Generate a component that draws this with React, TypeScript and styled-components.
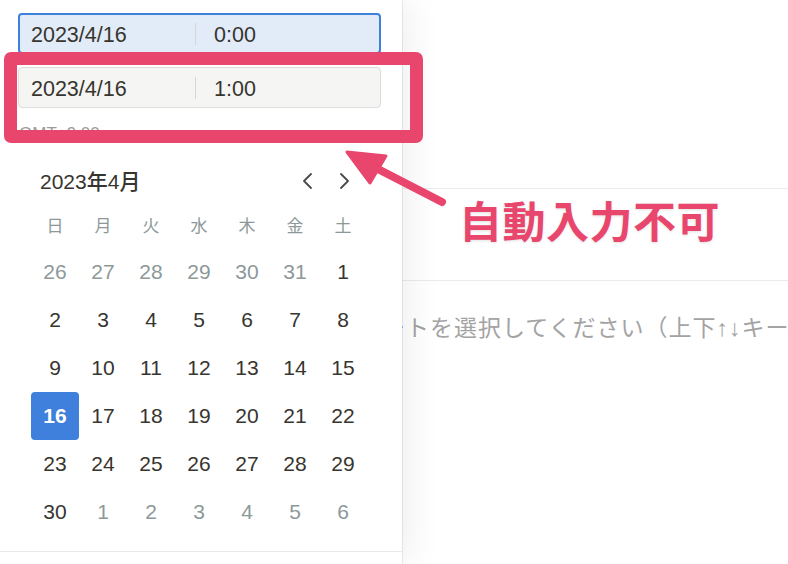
import styled, { createGlobalStyle } from 'styled-components'

const GlobalStyle = createGlobalStyle`
  body {
    margin: 0;
    background: #ffffff;
    font-family: "Liberation Sans", "Noto Sans CJK JP", sans-serif;
  }
`

const PINK = '#e9466e'

const Page = styled.div`
  position: relative;
  width: 788px;
  height: 564px;
  overflow: hidden;
  background: #ffffff;
`

const Main = styled.div`
  display: flex;
  flex-direction: column;
  padding-top: 188px;
`

const Rule = styled.div`
  height: 1px;
  background: #ebebeb;
`

const Band = styled.div`
  height: 91px;
`

const Hint = styled.div`
  margin-top: 33px;
  padding-left: 358px;
  font-size: 23px;
  line-height: 28px;
  letter-spacing: 1px;
  color: #a3a3a3;
  white-space: nowrap;
  font-family: "Liberation Sans", "Noto Sans CJK JP", sans-serif;
`

const Panel = styled.div`
  position: absolute;
  left: 0;
  top: 0;
  width: 402px;
  height: 564px;
  background: #ffffff;
  box-shadow: 1px 0 0 rgba(0, 0, 0, 0.07), 6px 0 34px rgba(0, 0, 0, 0.07);
  display: flex;
  flex-direction: column;
`

const Inputs = styled.div`
  display: flex;
  flex-direction: column;
  gap: 13px;
  padding: 13px 21px 0 18px;
`

const Field = styled.div<{ $active?: boolean }>`
  height: 41px;
  box-sizing: border-box;
  display: flex;
  align-items: center;
  border-radius: 4px;
  border: ${(p) => (p.$active ? '2px solid #3f80dc' : '1px solid #dcdcda')};
  background: ${(p) => (p.$active ? '#e2ebf8' : '#f5f5f3')};
  padding: ${(p) => (p.$active ? '3px 0 0 11px' : '3px 0 0 12px')};
  font-size: 21.5px;
  color: #37352f;
`

const DatePart = styled.span`
  width: 164px;
`

const Sep = styled.span`
  width: 1px;
  height: 22px;
  margin-top: -3px;
  background: #d6d6d4;
`

const TimePart = styled.span`
  padding-left: 18px;
`

const Zone = styled.div`
  padding: 16px 0 0 19px;
  font-size: 17px;
  line-height: 20px;
  color: #9b9b9b;
`

const Calendar = styled.div`
  padding: 16px 0 0 31px;
`

const Head = styled.div`
  height: 40px;
  width: 321px;
  display: flex;
  align-items: center;
  justify-content: space-between;
  padding-left: 9px;
  box-sizing: border-box;
`

const Month = styled.span`
  font-size: 21px;
  font-weight: 500;
  color: #37352f;
`

const Nav = styled.div`
  display: flex;
  gap: 24px;
  padding-top: 2px;
`

const Grid = styled.div`
  display: grid;
  grid-template-columns: repeat(7, 48px);
  grid-auto-rows: 48px;
`

const Weekday = styled.div`
  display: flex;
  align-items: center;
  justify-content: center;
  font-size: 17px;
  color: #8d9999;
  font-family: "Noto Sans CJK JP", sans-serif;
`

const Day = styled.div<{ $muted?: boolean; $selected?: boolean }>`
  display: flex;
  align-items: center;
  justify-content: center;
  border-radius: 4px;
  font-size: 21px;
  font-weight: ${(p) => (p.$selected ? 700 : 400)};
  color: ${(p) => (p.$selected ? '#ffffff' : p.$muted ? '#8d9999' : '#37352f')};
  background: ${(p) => (p.$selected ? '#3f80dc' : 'transparent')};
`

const Footer = styled.div`
  margin-top: 15px;
  height: 1px;
  background: #e9e9e7;
`

const Callout = styled.div`
  position: absolute;
  left: 4px;
  top: 52px;
  width: 419px;
  height: 91px;
  box-sizing: border-box;
  border: 13px solid ${PINK};
  border-radius: 7px;
`

const Arrow = styled.svg`
  position: absolute;
  left: 0;
  top: 0;
  pointer-events: none;
`

const Note = styled.div`
  position: absolute;
  left: 459px;
  top: 193px;
  font-size: 43px;
  line-height: 52px;
  font-weight: 700;
  letter-spacing: 0.5px;
  color: ${PINK};
  font-family: "Noto Sans CJK JP", sans-serif;
  text-shadow: 0 1px 3px rgba(0, 0, 0, 0.12);
`

const Chevron = ({ left }: { left?: boolean }) => (
  <svg width="14" height="20" viewBox="0 0 14 20">
    <path
      d={left ? 'M11 3 L4 10 L11 17' : 'M3 3 L10 10 L3 17'}
      fill="none"
      stroke="#4a4a48"
      strokeWidth="1.8"
      strokeLinecap="round"
      strokeLinejoin="round"
    />
  </svg>
)

const weekdays = ['日', '月', '火', '水', '木', '金', '土']

const days: { n: number; muted?: boolean }[] = [
  ...[26, 27, 28, 29, 30, 31].map((n) => ({ n, muted: true })),
  ...Array.from({ length: 30 }, (_, i) => ({ n: i + 1 })),
  ...[1, 2, 3, 4, 5, 6].map((n) => ({ n, muted: true })),
]

export default function App() {
  return (
    <>
      <GlobalStyle />
      <Page>
        <Main>
          <Rule />
          <Band />
          <Rule />
          <Hint>ノートを選択してください（上下↑↓キー</Hint>
        </Main>

        <Panel>
          <Inputs>
            <Field $active>
              <DatePart>2023/4/16</DatePart>
              <Sep />
              <TimePart>0:00</TimePart>
            </Field>
            <Field>
              <DatePart>2023/4/16</DatePart>
              <Sep />
              <TimePart>1:00</TimePart>
            </Field>
          </Inputs>
          <Zone>GMT+9:00</Zone>
          <Calendar>
            <Head>
              <Month>2023年4月</Month>
              <Nav>
                <Chevron left />
                <Chevron />
              </Nav>
            </Head>
            <Grid>
              {weekdays.map((w) => (
                <Weekday key={w}>{w}</Weekday>
              ))}
              {days.map((d, i) => (
                <Day key={i} $muted={d.muted} $selected={!d.muted && d.n === 16}>
                  {d.n}
                </Day>
              ))}
            </Grid>
          </Calendar>
          <Footer />
        </Panel>

        <Callout />
        <Arrow width="788" height="564" viewBox="0 0 788 564">
          <line x1="442" y1="202" x2="374" y2="167" stroke={PINK} strokeWidth="8" strokeLinecap="round" />
          <polygon points="347,152 386,156 370,183" fill={PINK} stroke={PINK} strokeWidth="3" strokeLinejoin="round" />
        </Arrow>
        <Note>自動入力不可</Note>
      </Page>
    </>
  )
}
